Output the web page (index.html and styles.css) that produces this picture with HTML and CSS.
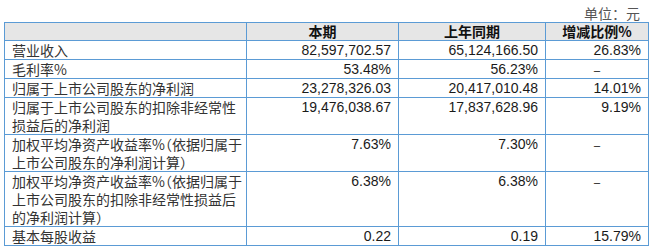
FILE: index.html
```html
<!doctype html>
<html>
  <head>
    <meta charset="utf-8">
    <link rel="stylesheet" href="styles.css">
    <title>主要会计数据</title>
  </head>
  <body>
    <div class="unit">单位：元</div>
    <table class="report">
      <colgroup>
        <col class="c-name">
        <col class="c-cur">
        <col class="c-prev">
        <col class="c-rate">
      </colgroup>
      <tr class="head">
        <td></td>
        <td>本期</td>
        <td>上年同期</td>
        <td>增减比例%</td>
      </tr>
      <tr>
        <td class="name">营业收入</td>
        <td class="num">82,597,702.57</td>
        <td class="num">65,124,166.50</td>
        <td class="num">26.83%</td>
      </tr>
      <tr>
        <td class="name">毛利率%</td>
        <td class="num">53.48%</td>
        <td class="num">56.23%</td>
        <td class="dash">–</td>
      </tr>
      <tr>
        <td class="name">归属于上市公司股东的净利润</td>
        <td class="num">23,278,326.03</td>
        <td class="num">20,417,010.48</td>
        <td class="num">14.01%</td>
      </tr>
      <tr>
        <td class="name">归属于上市公司股东的扣除非经常性损益后的净利润</td>
        <td class="num">19,476,038.67</td>
        <td class="num">17,837,628.96</td>
        <td class="num">9.19%</td>
      </tr>
      <tr>
        <td class="name">加权平均净资产收益率%（依据归属于上市公司股东的净利润计算）</td>
        <td class="num">7.63%</td>
        <td class="num">7.30%</td>
        <td class="dash">–</td>
      </tr>
      <tr>
        <td class="name">加权平均净资产收益率%（依据归属于上市公司股东的扣除非经常性损益后的净利润计算）</td>
        <td class="num">6.38%</td>
        <td class="num">6.38%</td>
        <td class="dash">–</td>
      </tr>
      <tr>
        <td class="name">基本每股收益</td>
        <td class="num">0.22</td>
        <td class="num">0.19</td>
        <td class="num">15.79%</td>
      </tr>
    </table>
  </body>
</html>
```

FILE: styles.css
```css
body {
  margin: 0;
  padding: 4px 4px 0 4px;
  background: #ffffff;
  font-family: "Noto Sans CJK SC", sans-serif;
  font-size: 14px;
  color: #262626;
}
.unit {
  text-align: right;
  color: #555555;
  line-height: 18px;
  padding-right: 8px;
}
.report {
  width: 644px;
  border-collapse: collapse;
  table-layout: fixed;
}
.c-name { width: 242px; }
.c-cur { width: 152px; }
.c-prev { width: 147px; }
.c-rate { width: 103px; }
.report td {
  border: 1px solid #5b9bd5;
  padding: 0 7px;
  line-height: 18px;
  vertical-align: top;
}
.head td {
  background-color: #e6e6e6;
  font-weight: bold;
  text-align: center;
  color: #111111;
  line-height: 17px;
}
.report td.name {
  color: #333333;
  padding-right: 0;
  font-feature-settings: "halt";
}
.num {
  text-align: right;
  font-family: "Liberation Sans Narrow", "Liberation Sans", sans-serif;
  font-size: 14px;
  color: #1a1a1a;
}
.dash {
  text-align: center;
  color: #333333;
}
```
